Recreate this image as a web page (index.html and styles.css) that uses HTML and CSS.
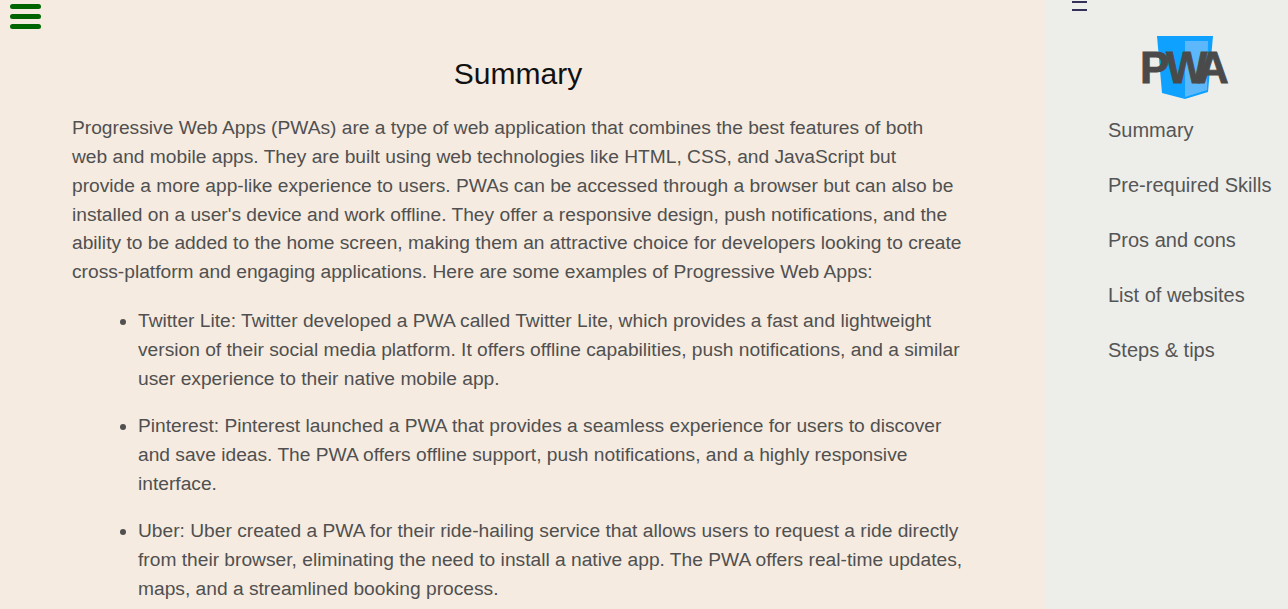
FILE: index.html
```html
<!DOCTYPE html>
<html lang="en">
<head>
    <meta charset="UTF-8">
    <meta name="viewport" content="width=device-width, initial-scale=1.0">
    <title>Progressive Web Apps</title>
    <link rel="stylesheet" href="styles.css">
</head>
<body>

<div class="page">
    <main class="main">
        <button class="menu-btn" aria-label="Menu">
            <span class="menu-bar"></span>
            <span class="menu-bar"></span>
            <span class="menu-bar"></span>
        </button>

        <section class="content">
            <h1 class="title">Summary</h1>
            <p class="intro">Progressive Web Apps (PWAs) are a type of web application that combines the best features of both web and mobile apps. They are built using web technologies like HTML, CSS, and JavaScript but provide a more app-like experience to users. PWAs can be accessed through a browser but can also be installed on a user's device and work offline. They offer a responsive design, push notifications, and the ability to be added to the home screen, making them an attractive choice for developers looking to create cross-platform and engaging applications. Here are some examples of Progressive Web Apps:</p>
            <ul class="examples">
                <li>Twitter Lite: Twitter developed a PWA called Twitter Lite, which provides a fast and lightweight version of their social media platform. It offers offline capabilities, push notifications, and a similar user experience to their native mobile app.</li>
                <li>Pinterest: Pinterest launched a PWA that provides a seamless experience for users to discover and save ideas. The PWA offers offline support, push notifications, and a highly responsive interface.</li>
                <li>Uber: Uber created a PWA for their ride-hailing service that allows users to request a ride directly from their browser, eliminating the need to install a native app. The PWA offers real-time updates, maps, and a streamlined booking process.</li>
            </ul>
        </section>
    </main>

    <aside class="sidebar">
        <div class="toggle">
            <span class="toggle-line"></span>
            <span class="toggle-line"></span>
        </div>

        <!-- logo: shield with the letters on top -->
        <svg class="logo" width="92" height="68" viewBox="0 0 92 68">
            <polygon points="17,2 73,2 68,58 45,65 22,59" fill="#0fa1ff"/>
            <polygon points="45,7 68,7 67,56 45,63" fill="#5cb8fb"/>
            <text class="logo-text" x="0 26 57" y="49">PWA</text>
        </svg>

        <nav class="side-nav">
            <a href="#">Summary</a>
            <a href="#">Pre-required Skills</a>
            <a href="#">Pros and cons</a>
            <a href="#">List of websites</a>
            <a href="#">Steps &amp; tips</a>
        </nav>
    </aside>
</div>

</body>
</html>
```

FILE: styles.css
```css
html, body {
    height: 100%;
}

body {
    margin: 0;
    overflow: hidden;
    font-family: "Liberation Sans", Arial, sans-serif;
    color: #505050;
}

.page {
    display: flex;
    height: 100vh;
}

.main {
    flex: 1;
    min-width: 0;
    background-color: #f5ebe0;
    padding: 4px 83px 0 10px;
    overflow: hidden;
}

.menu-btn {
    display: flex;
    flex-direction: column;
    gap: 5px;
    width: 31px;
    padding: 0;
    border: none;
    background: none;
}

.menu-bar {
    display: block;
    height: 5px;
    border-radius: 3px;
    background-color: #006400;
}

.content {
    padding-left: 62px;
}

.title {
    margin: 28px 0 23.2px;
    padding-left: 1px;
    font-size: 30px;
    font-weight: normal;
    line-height: 34px;
    text-align: center;
    color: #111;
}

.intro {
    margin: 0 0 20px;
    font-size: 19.2px;
    line-height: 1.5;
}

.examples {
    margin: 0;
    padding-left: 66px;
    font-size: 19.2px;
    line-height: 1.5;
}

.examples li {
    margin-bottom: 18.6px;
}

.sidebar {
    width: 242px;
    flex-shrink: 0;
    background-color: #edede9;
}

.toggle {
    display: flex;
    flex-direction: column;
    gap: 5.5px;
    width: 15px;
    margin: 1px 0 0 26px;
}

.toggle-line {
    height: 2px;
    background-color: #33305a;
}

.logo {
    display: block;
    margin: 23.5px 0 0 94px;
}

.logo-text {
    font-family: "Liberation Sans", Arial, sans-serif;
    font-size: 44px;
    font-weight: bold;
    fill: #4a4a4a;
    stroke: #4a4a4a;
    stroke-width: 0.8;
}

.side-nav {
    display: flex;
    flex-direction: column;
    gap: 32px;
    margin: 17px 0 0 62px;
}

.side-nav a {
    font-size: 20px;
    line-height: 23px;
    color: #555;
    text-decoration: none;
}
```
